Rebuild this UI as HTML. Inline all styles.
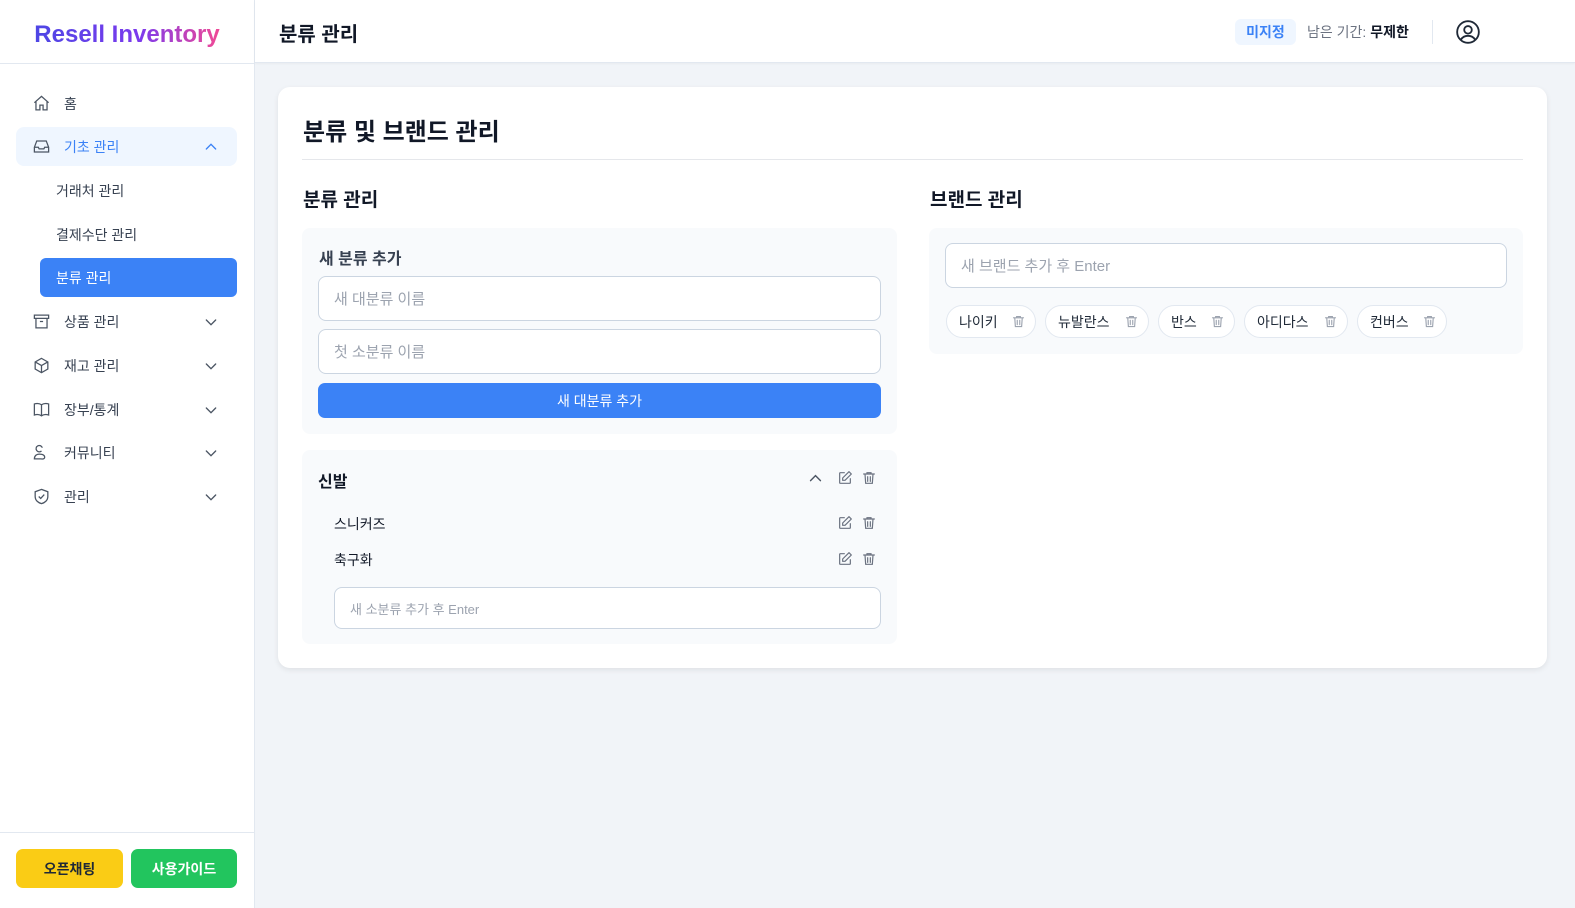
<!DOCTYPE html>
<html><head><meta charset="utf-8"><style>
*{box-sizing:border-box;margin:0;padding:0}
body{width:1575px;height:908px;overflow:hidden;background:#f1f4f8;font-family:"Liberation Sans","Noto Sans CJK KR",sans-serif;color:#1f2937;position:relative}
.abs{position:absolute}
.side{left:0;top:0;width:255px;height:908px;background:#fff;border-right:1px solid #e2e8f0}
.logo{left:0;top:3px;width:254px;height:63px;display:flex;align-items:center;justify-content:center;font-size:24px;font-weight:bold;background:linear-gradient(90deg,#4f46e5 15%,#7c3aed 55%,#ec4899 85%);-webkit-background-clip:text;color:transparent}
.nav{left:16px;width:221px;height:39px;display:flex;align-items:center;font-size:14px;color:#374151;border-radius:8px}
.nav svg.i{position:absolute;left:16px;width:19px;height:19px}
.nav span{position:absolute;left:48px}
.nav svg.c{position:absolute;right:18px;width:16px;height:16px}
.sub{left:40px;width:197px;height:39px;display:flex;align-items:center;padding-left:16px;font-size:14px;color:#374151;border-radius:6px}
.hdr{left:255px;top:0;right:0;height:63px;background:#fff;border-bottom:1px solid #e2e8f0;box-shadow:0 1px 2px rgba(0,0,0,.04)}
.card{left:278px;top:87px;width:1269px;height:581px;background:#fff;border-radius:12px;box-shadow:0 2px 6px rgba(0,0,0,.08)}
.box{background:#f8fafc;border-radius:8px}
.inp{background:#fff;border:1px solid #cbd5e1;border-radius:8px;display:flex;align-items:center;padding-left:15px;color:#9ca3af;font-size:15px}
.chip{top:305px;height:33px;border:1px solid #e2e8f0;border-radius:17px;background:#fff;display:flex;align-items:center;padding-left:12px;font-size:14px;color:#1f2937}
.chip svg{position:absolute;right:9px}
</style></head><body>
<svg width="0" height="0" style="position:absolute"><defs>
<symbol id="tr" viewBox="0 0 24 24"><g fill="none" stroke="currentColor" stroke-width="1.8" stroke-linecap="round"><path d="M4 6h16M9 6V4h6v2M6 6l1 14h10l1-14M10 10v7M14 10v7"/></g></symbol>
<symbol id="ed" viewBox="0 0 24 24"><g fill="none" stroke="currentColor" stroke-width="1.8" stroke-linecap="round" stroke-linejoin="round"><path d="M11 4H5a1 1 0 0 0-1 1v14a1 1 0 0 0 1 1h14a1 1 0 0 0 1-1v-6"/><path d="M18 2.5l3.5 3.5L12 15.5H8.5V12z"/></g></symbol>
<symbol id="dn" viewBox="0 0 24 24"><path d="M5 9l7 7 7-7" fill="none" stroke="currentColor" stroke-width="2" stroke-linecap="round"/></symbol>
<symbol id="up" viewBox="0 0 24 24"><path d="M5 15l7-7 7 7" fill="none" stroke="currentColor" stroke-width="2" stroke-linecap="round"/></symbol>
</defs></svg>

<div class="abs side"></div>
<div class="abs" style="left:0;top:63px;width:254px;border-top:1px solid #e2e8f0"></div>
<div class="abs logo">Resell Inventory</div>

<div class="abs nav" style="top:84px"><svg class="i" viewBox="0 0 24 24" fill="none" stroke="#4b5563" stroke-width="1.6"><path d="M3 11l9-8 9 8M5 9v11h5v-6h4v6h5V9"/></svg><span>홈</span></div>
<div class="abs nav" style="top:127px;background:#eff6ff;color:#3b82f6"><svg class="i" viewBox="0 0 24 24" fill="none" stroke="#4b5563" stroke-width="1.6"><path d="M3 13l3-8h12l3 8v6H3zM3 13h5l1 2h6l1-2h5"/></svg><span>기초 관리</span><svg class="c" style="color:#3b82f6"><use href="#up"/></svg></div>
<div class="abs sub" style="top:171px">거래처 관리</div>
<div class="abs sub" style="top:215px">결제수단 관리</div>
<div class="abs sub" style="top:258px;background:#3b82f6;color:#fff">분류 관리</div>
<div class="abs nav" style="top:302px"><svg class="i" viewBox="0 0 24 24" fill="none" stroke="#4b5563" stroke-width="1.6"><path d="M3 4h18v4H3zM5 8v12h14V8M10 12h4"/></svg><span>상품 관리</span><svg class="c" style="color:#4b5563"><use href="#dn"/></svg></div>
<div class="abs nav" style="top:346px"><svg class="i" viewBox="0 0 24 24" fill="none" stroke="#4b5563" stroke-width="1.6"><path d="M12 3l8 4.5v9L12 21l-8-4.5v-9zM4 7.5l8 4.5 8-4.5M12 12v9"/></svg><span>재고 관리</span><svg class="c" style="color:#4b5563"><use href="#dn"/></svg></div>
<div class="abs nav" style="top:390px"><svg class="i" viewBox="0 0 24 24" fill="none" stroke="#4b5563" stroke-width="1.6"><path d="M12 6c-3-2-6-2-9-1v14c3-1 6-1 9 1 3-2 6-2 9-1V5c-3-1-6-1-9 1zM12 6v14"/></svg><span>장부/통계</span><svg class="c" style="color:#4b5563"><use href="#dn"/></svg></div>
<div class="abs nav" style="top:433px"><svg class="i" viewBox="0 0 24 24" fill="none" stroke="#4b5563" stroke-width="1.6"><path d="M13 6a4 4 0 1 0-1 4M3 20c0-4 3-6 6-6 4 0 7 1 7 4s-4 2-7 2z"/></svg><span>커뮤니티</span><svg class="c" style="color:#4b5563"><use href="#dn"/></svg></div>
<div class="abs nav" style="top:477px"><svg class="i" viewBox="0 0 24 24" fill="none" stroke="#4b5563" stroke-width="1.6"><path d="M12 3l8 3v6c0 5-4 8-8 9-4-1-8-4-8-9V6zM8.5 12l2.5 2.5 4.5-5"/></svg><span>관리</span><svg class="c" style="color:#4b5563"><use href="#dn"/></svg></div>

<div class="abs" style="left:0;top:832px;width:254px;border-top:1px solid #e2e8f0"></div>
<div class="abs" style="left:16px;top:849px;width:107px;height:39px;background:#facc15;border-radius:7px;display:flex;align-items:center;justify-content:center;font-size:14px;font-weight:bold;color:#1f2937">오픈채팅</div>
<div class="abs" style="left:131px;top:849px;width:106px;height:39px;background:#22c55e;border-radius:7px;display:flex;align-items:center;justify-content:center;font-size:14px;font-weight:bold;color:#fff">사용가이드</div>

<div class="abs hdr"></div>
<div class="abs" style="left:279px;top:18px;font-size:20px;font-weight:bold;color:#111827">분류 관리</div>
<div class="abs" style="left:1235px;top:19px;width:61px;height:26px;background:#eff6ff;border-radius:6px;color:#3b82f6;font-size:14px;font-weight:bold;display:flex;align-items:center;justify-content:center">미지정</div>
<div class="abs" style="left:1307px;top:22px;font-size:14px;color:#6b7280">남은 기간: <b style="color:#111827">무제한</b></div>
<div class="abs" style="left:1432px;top:20px;height:24px;border-left:1px solid #e2e8f0"></div>
<svg class="abs" style="left:1455px;top:19px" width="26" height="26" viewBox="0 0 24 24" fill="none" stroke="#1f2937" stroke-width="1.7"><circle cx="12" cy="12" r="10"/><circle cx="12" cy="10" r="3.5"/><path d="M5.5 19c1.5-2.5 4-3.5 6.5-3.5s5 1 6.5 3.5"/></svg>

<div class="abs card"></div>
<div class="abs" style="left:303px;top:112px;font-size:24px;font-weight:bold;color:#111827">분류 및 브랜드 관리</div>
<div class="abs" style="left:302px;top:159px;width:1221px;border-top:1px solid #e5e7eb"></div>
<div class="abs" style="left:303px;top:185px;font-size:19px;font-weight:bold;color:#111827">분류 관리</div>
<div class="abs" style="left:930px;top:185px;font-size:19px;font-weight:bold;color:#111827">브랜드 관리</div>

<div class="abs box" style="left:302px;top:228px;width:595px;height:206px"></div>
<div class="abs" style="left:319px;top:245px;font-size:16px;font-weight:bold;color:#374151">새 분류 추가</div>
<div class="abs inp" style="left:318px;top:276px;width:563px;height:45px">새 대분류 이름</div>
<div class="abs inp" style="left:318px;top:329px;width:563px;height:45px">첫 소분류 이름</div>
<div class="abs" style="left:318px;top:383px;width:563px;height:35px;background:#3b82f6;border-radius:7px;color:#fff;font-size:14px;display:flex;align-items:center;justify-content:center">새 대분류 추가</div>

<div class="abs box" style="left:302px;top:450px;width:595px;height:194px"></div>
<div class="abs" style="left:318px;top:468px;font-size:16px;font-weight:bold;color:#111827">신발</div>
<svg class="abs" style="left:807px;top:470px;color:#4b5563" width="17" height="17"><use href="#up"/></svg>
<svg class="abs" style="left:837px;top:470px;color:#6b7280" width="16" height="16"><use href="#ed"/></svg>
<svg class="abs" style="left:861px;top:470px;color:#6b7280" width="16" height="16"><use href="#tr"/></svg>
<div class="abs" style="left:334px;top:514px;font-size:14px;color:#111827">스니커즈</div>
<svg class="abs" style="left:837px;top:515px;color:#6b7280" width="16" height="16"><use href="#ed"/></svg>
<svg class="abs" style="left:861px;top:515px;color:#6b7280" width="16" height="16"><use href="#tr"/></svg>
<div class="abs" style="left:334px;top:550px;font-size:14px;color:#111827">축구화</div>
<svg class="abs" style="left:837px;top:551px;color:#6b7280" width="16" height="16"><use href="#ed"/></svg>
<svg class="abs" style="left:861px;top:551px;color:#6b7280" width="16" height="16"><use href="#tr"/></svg>
<div class="abs inp" style="left:334px;top:587px;width:547px;height:42px;font-size:13px">새 소분류 추가 후 Enter</div>

<div class="abs box" style="left:929px;top:228px;width:594px;height:126px"></div>
<div class="abs inp" style="left:945px;top:243px;width:562px;height:45px">새 브랜드 추가 후 Enter</div>
<div class="abs chip" style="left:946px;width:90px">나이키<svg width="15" height="15" style="color:#9ca3af"><use href="#tr"/></svg></div>
<div class="abs chip" style="left:1045px;width:104px">뉴발란스<svg width="15" height="15" style="color:#9ca3af"><use href="#tr"/></svg></div>
<div class="abs chip" style="left:1158px;width:77px">반스<svg width="15" height="15" style="color:#9ca3af"><use href="#tr"/></svg></div>
<div class="abs chip" style="left:1244px;width:104px">아디다스<svg width="15" height="15" style="color:#9ca3af"><use href="#tr"/></svg></div>
<div class="abs chip" style="left:1357px;width:90px">컨버스<svg width="15" height="15" style="color:#9ca3af"><use href="#tr"/></svg></div>
</body></html>
